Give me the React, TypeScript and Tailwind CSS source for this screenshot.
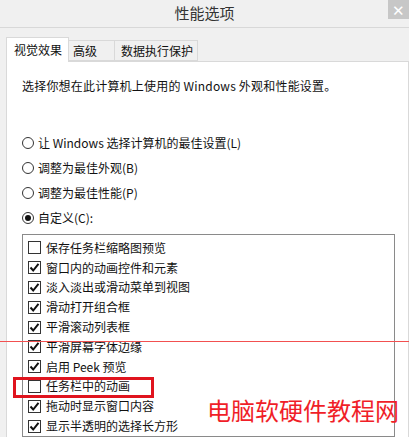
const radios = [
  { label: "让 Windows 选择计算机的最佳设置(L)", checked: false },
  { label: "调整为最佳外观(B)", checked: false },
  { label: "调整为最佳性能(P)", checked: false },
  { label: "自定义(C):", checked: true },
];

const effects = [
  { label: "保存任务栏缩略图预览", checked: false },
  { label: "窗口内的动画控件和元素", checked: true },
  { label: "淡入淡出或滑动菜单到视图", checked: true },
  { label: "滑动打开组合框", checked: true },
  { label: "平滑滚动列表框", checked: true },
  { label: "平滑屏幕字体边缘", checked: true },
  { label: "启用 Peek 预览", checked: true },
  { label: "任务栏中的动画", checked: false },
  { label: "拖动时显示窗口内容", checked: true },
  { label: "显示半透明的选择长方形", checked: true },
];

const Radio = ({ checked }: { checked: boolean }) => (
  <span className="w-[12px] h-[12px] rounded-full border border-[#333] bg-white flex items-center justify-center shrink-0">
    {checked && <span className="w-[6px] h-[6px] rounded-full bg-[#111]" />}
  </span>
);

const Checkbox = ({ checked }: { checked: boolean }) => (
  <span className="w-[13px] h-[13px] border border-[#333] bg-white flex items-center justify-center shrink-0">
    {checked && (
      <svg width="11" height="11" viewBox="0 0 11 11">
        <path d="M1.5 5.5 L4.2 8.5 L9.5 1.8" fill="none" stroke="#111" strokeWidth="2" />
      </svg>
    )}
  </span>
);

const App = () => {
  return (
    <div className="relative w-[409px] h-[437px] overflow-hidden bg-[#f0f0f0] text-[12px] text-[#111] font-['Noto_Sans_CJK_SC',sans-serif] flex flex-col">
      {/* title bar */}
      <div className="relative h-[28px] shrink-0 border-b border-[#d8d8d8] flex items-center justify-center">
        <span className="text-[15px] text-[#333]">性能选项</span>
        <div className="absolute right-0 top-0 w-[21px] h-[19px] bg-[#c7c7c7] flex items-center justify-center text-white text-[15px] leading-none">
          ✕
        </div>
      </div>

      {/* tabs */}
      <div className="flex items-end pl-[6px] pt-[9px] shrink-0">
        <div className="relative z-10 -mb-px w-[63px] h-[25px] pl-[7px] border border-b-0 border-[#d9d9d9] bg-white flex items-center">
          视觉效果
        </div>
        <div className="h-[21px] w-[46px] pl-[4px] border border-l-0 border-[#d9d9d9] bg-[#f0f0f0] flex items-center">
          高级
        </div>
        <div className="h-[21px] w-[83px] pl-[6px] border border-l-0 border-[#d9d9d9] bg-[#f0f0f0] flex items-center">
          数据执行保护
        </div>
      </div>

      {/* panel */}
      <div className="flex-1 ml-[6px] border border-[#d9d9d9] bg-white pl-[15px] pr-[13px] pt-[16px]">
        <p className="leading-[16px] tracking-[0.2px]">选择你想在此计算机上使用的 Windows 外观和性能设置。</p>

        <div className="mt-[36px] flex flex-col">
          {radios.map((r) => (
            <div key={r.label} className="h-[25px] flex items-center gap-[4px]">
              <Radio checked={r.checked} />
              <span>{r.label}</span>
            </div>
          ))}
        </div>

        <div className="mt-[4px] border border-[#8a8a8a] pt-[3px] pl-[5px] flex flex-col">
          {effects.map((e) => (
            <div key={e.label} className="h-[19.8px] shrink-0 flex items-center gap-[5px]">
              <Checkbox checked={e.checked} />
              <span>{e.label}</span>
            </div>
          ))}
        </div>
      </div>

      {/* annotations over the screenshot */}
      <div className="absolute left-0 top-[341px] w-full h-[1px] bg-[#f25050]" />
      <div className="absolute left-[13px] top-[377px] w-[141px] h-[21px] border-[3px] border-[#e0141e]" />
      <div className="absolute left-[207px] top-[396px] text-[24px] leading-[28px] text-[#f01e28]">电脑软硬件教程网</div>
    </div>
  );
};

export default App;
